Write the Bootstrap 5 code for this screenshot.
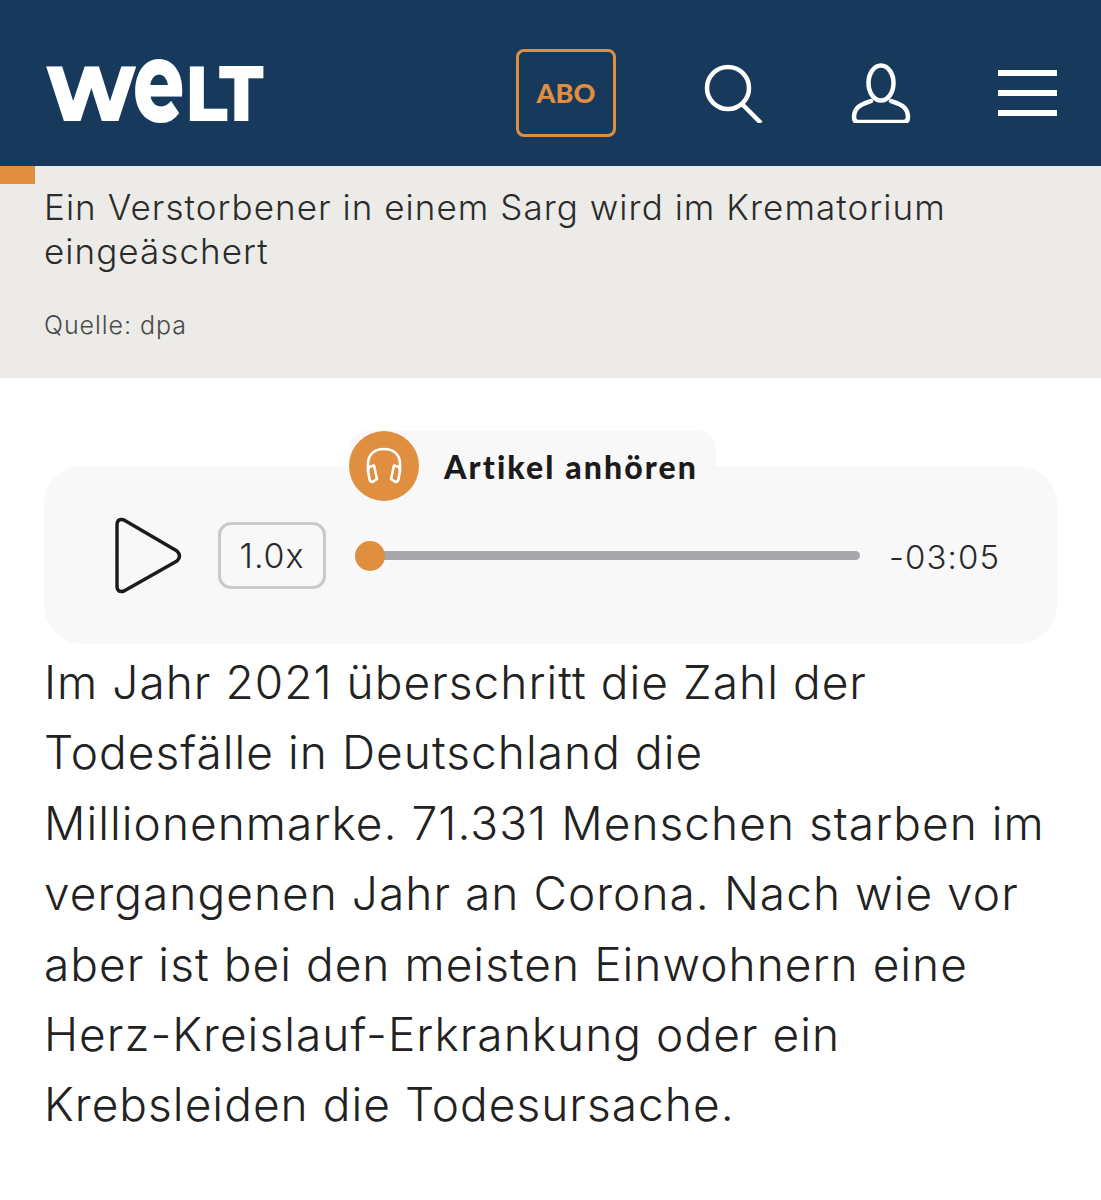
<!DOCTYPE html>
<html lang="de"><head><meta charset="utf-8">
<link href="https://cdn.jsdelivr.net/npm/bootstrap@5.3.0/dist/css/bootstrap.min.css" rel="stylesheet">
<style>
body{background:#fff;font-family:"Inter","Lato","Liberation Sans",sans-serif;font-weight:300;color:#1b1b1b;overflow:hidden}
.topbar{background:#173a5c;height:166px;padding:20px 44px 0 45px}
.logo{font-family:"Montserrat","Lato",sans-serif;font-weight:800;color:#fff;font-size:78px;line-height:56px;height:56px;letter-spacing:-4px;display:flex;align-items:baseline;margin-top:-16px}
.logo-e{display:inline-block;font-size:100px;line-height:56px;letter-spacing:0;transform:scale(.8,1.14);transform-origin:0 100%;margin-right:-13px}
.logo-lt{display:inline-block;transform:scaleX(.9);transform-origin:0 100%}
.abo{width:100px;height:88px;border:3px solid #e08e3f;border-radius:8px;color:#e08e3f;font-family:"Lato",sans-serif;font-weight:900;font-size:27px;margin-right:88px}
.ic-search{width:60px;height:60px;margin-right:87px}
.ic-user{width:60px;height:60px;margin-right:87px}
.ic-menu{width:59px;height:46px}
.caption{background:#ecebe8;height:212px;padding:19px 44px 0;position:relative}
.flag{position:absolute;left:0;top:0;width:35px;height:18px;background:#e08e3f}
.cap-text{font-size:35px;line-height:44px;letter-spacing:1.05px;color:#2b2b2b;margin:0}
.cap-src{font-size:25px;line-height:32px;letter-spacing:.95px;color:#4a4a4a;margin:36px 0 0}
.player{margin:88px 44px 0;height:178px;background:#f8f8f9;border-radius:38px;position:relative;padding:0 57px 0 70px}
.tab{position:absolute;left:305px;top:-35px;width:367px;height:60px;background:#f8f8f9;border-radius:18px 18px 0 0;padding:12px 0 0 95px;font-family:"Lato",sans-serif;font-weight:900;font-size:32px;letter-spacing:2.1px;color:#1b1b1b}
.disc{position:absolute;left:0;top:0;width:70px;height:70px;border-radius:50%;background:#e08e3f}
.speed{width:108px;height:67px;border:3px solid #c9c9ca;border-radius:13px;font-size:34px;letter-spacing:.9px;margin:0 44px 0 34px;color:#2a2a2a}
.track{height:9px;background:#a7a7ab;border-radius:5px;position:relative;width:490px}
.thumb{position:absolute;left:-15px;top:-10px;width:30px;height:30px;border-radius:50%;background:#e08e3f}
.remain{font-size:33px;letter-spacing:1.1px;color:#2a2a2a;margin-left:29px;white-space:nowrap;padding-top:6px}
.body-text{margin:0;padding:3px 0 0 44px;font-size:46px;line-height:70.4px;letter-spacing:1.05px;color:#222;white-space:nowrap}
</style></head><body>
<header class="topbar d-flex align-items-center">
 <div class="logo me-auto"><span>W</span><span class="logo-e">e</span><span class="logo-lt">LT</span></div>
 <a class="abo d-flex align-items-center justify-content-center text-decoration-none">ABO</a>
 <svg class="ic-search" viewBox="0 0 60 60" fill="none" stroke="#fff" stroke-width="4.5"><circle cx="24" cy="25" r="21"/><path d="M38 41 L57 60"/></svg>
 <svg class="ic-user" viewBox="0 0 60 60" fill="none" stroke="#fff" stroke-width="4.5" stroke-linecap="round" stroke-linejoin="round"><ellipse cx="30" cy="20" rx="12.5" ry="17.500"/><path d="M20 38 C12 41 3 43 3 54 Q3 59 7 59 H53 Q57 59 57 54 C57 43 48 41 40 38"/></svg>
 <svg class="ic-menu" viewBox="0 0 59 46" fill="#fff"><rect y="0" width="59" height="6"/><rect y="20" width="59" height="6"/><rect y="40" width="59" height="6"/></svg>
</header>
<section class="caption">
 <div class="flag"></div>
 <p class="cap-text">Ein Verstorbener in einem Sarg wird im Krematorium<br>eingeäschert</p>
 <p class="cap-src">Quelle: dpa</p>
</section>
<section class="player d-flex align-items-center">
 <div class="tab d-flex align-items-center"><span class="disc d-flex align-items-center justify-content-center"><svg width="38" height="38" viewBox="0 0 38 38" fill="none" stroke="#fff" stroke-width="2.600" stroke-linejoin="round" stroke-linecap="round"><path d="M3 24 V17 C3 7 10 2 19 2 C28 2 35 7 35 17 V24"/><path d="M4 20 L9 18.500 L12 32 L7.500 35 Q5 35 4.500 32 L3 24 Z"/><path d="M34 20 L29 18.500 L26 32 L30.500 35 Q33 35 33.500 32 L35 24 Z"/></svg></span>Artikel anhören</div>
 <svg width="70" height="78" viewBox="0 0 70 78" fill="none" stroke="#1b1b1b" stroke-width="3.400" stroke-linejoin="round" class="flex-shrink-0"><path d="M3 9 Q3 2 10 4 L63 35 Q68 40 63 45 L10 75 Q3 77 3 70 Z"/></svg>
 <div class="speed d-flex align-items-center justify-content-center flex-shrink-0">1.0x</div>
 <div class="track flex-shrink-0"><span class="thumb"></span></div>
 <div class="remain">-03:05</div>
</section>
<p class="body-text">Im Jahr 2021 überschritt die Zahl der<br>Todesfälle in Deutschland die<br>Millionenmarke. 71.331 Menschen starben im<br>vergangenen Jahr an Corona. Nach wie vor<br>aber ist bei den meisten Einwohnern eine<br>Herz-Kreislauf-Erkrankung oder ein<br>Krebsleiden die Todesursache.</p>
</body></html>
